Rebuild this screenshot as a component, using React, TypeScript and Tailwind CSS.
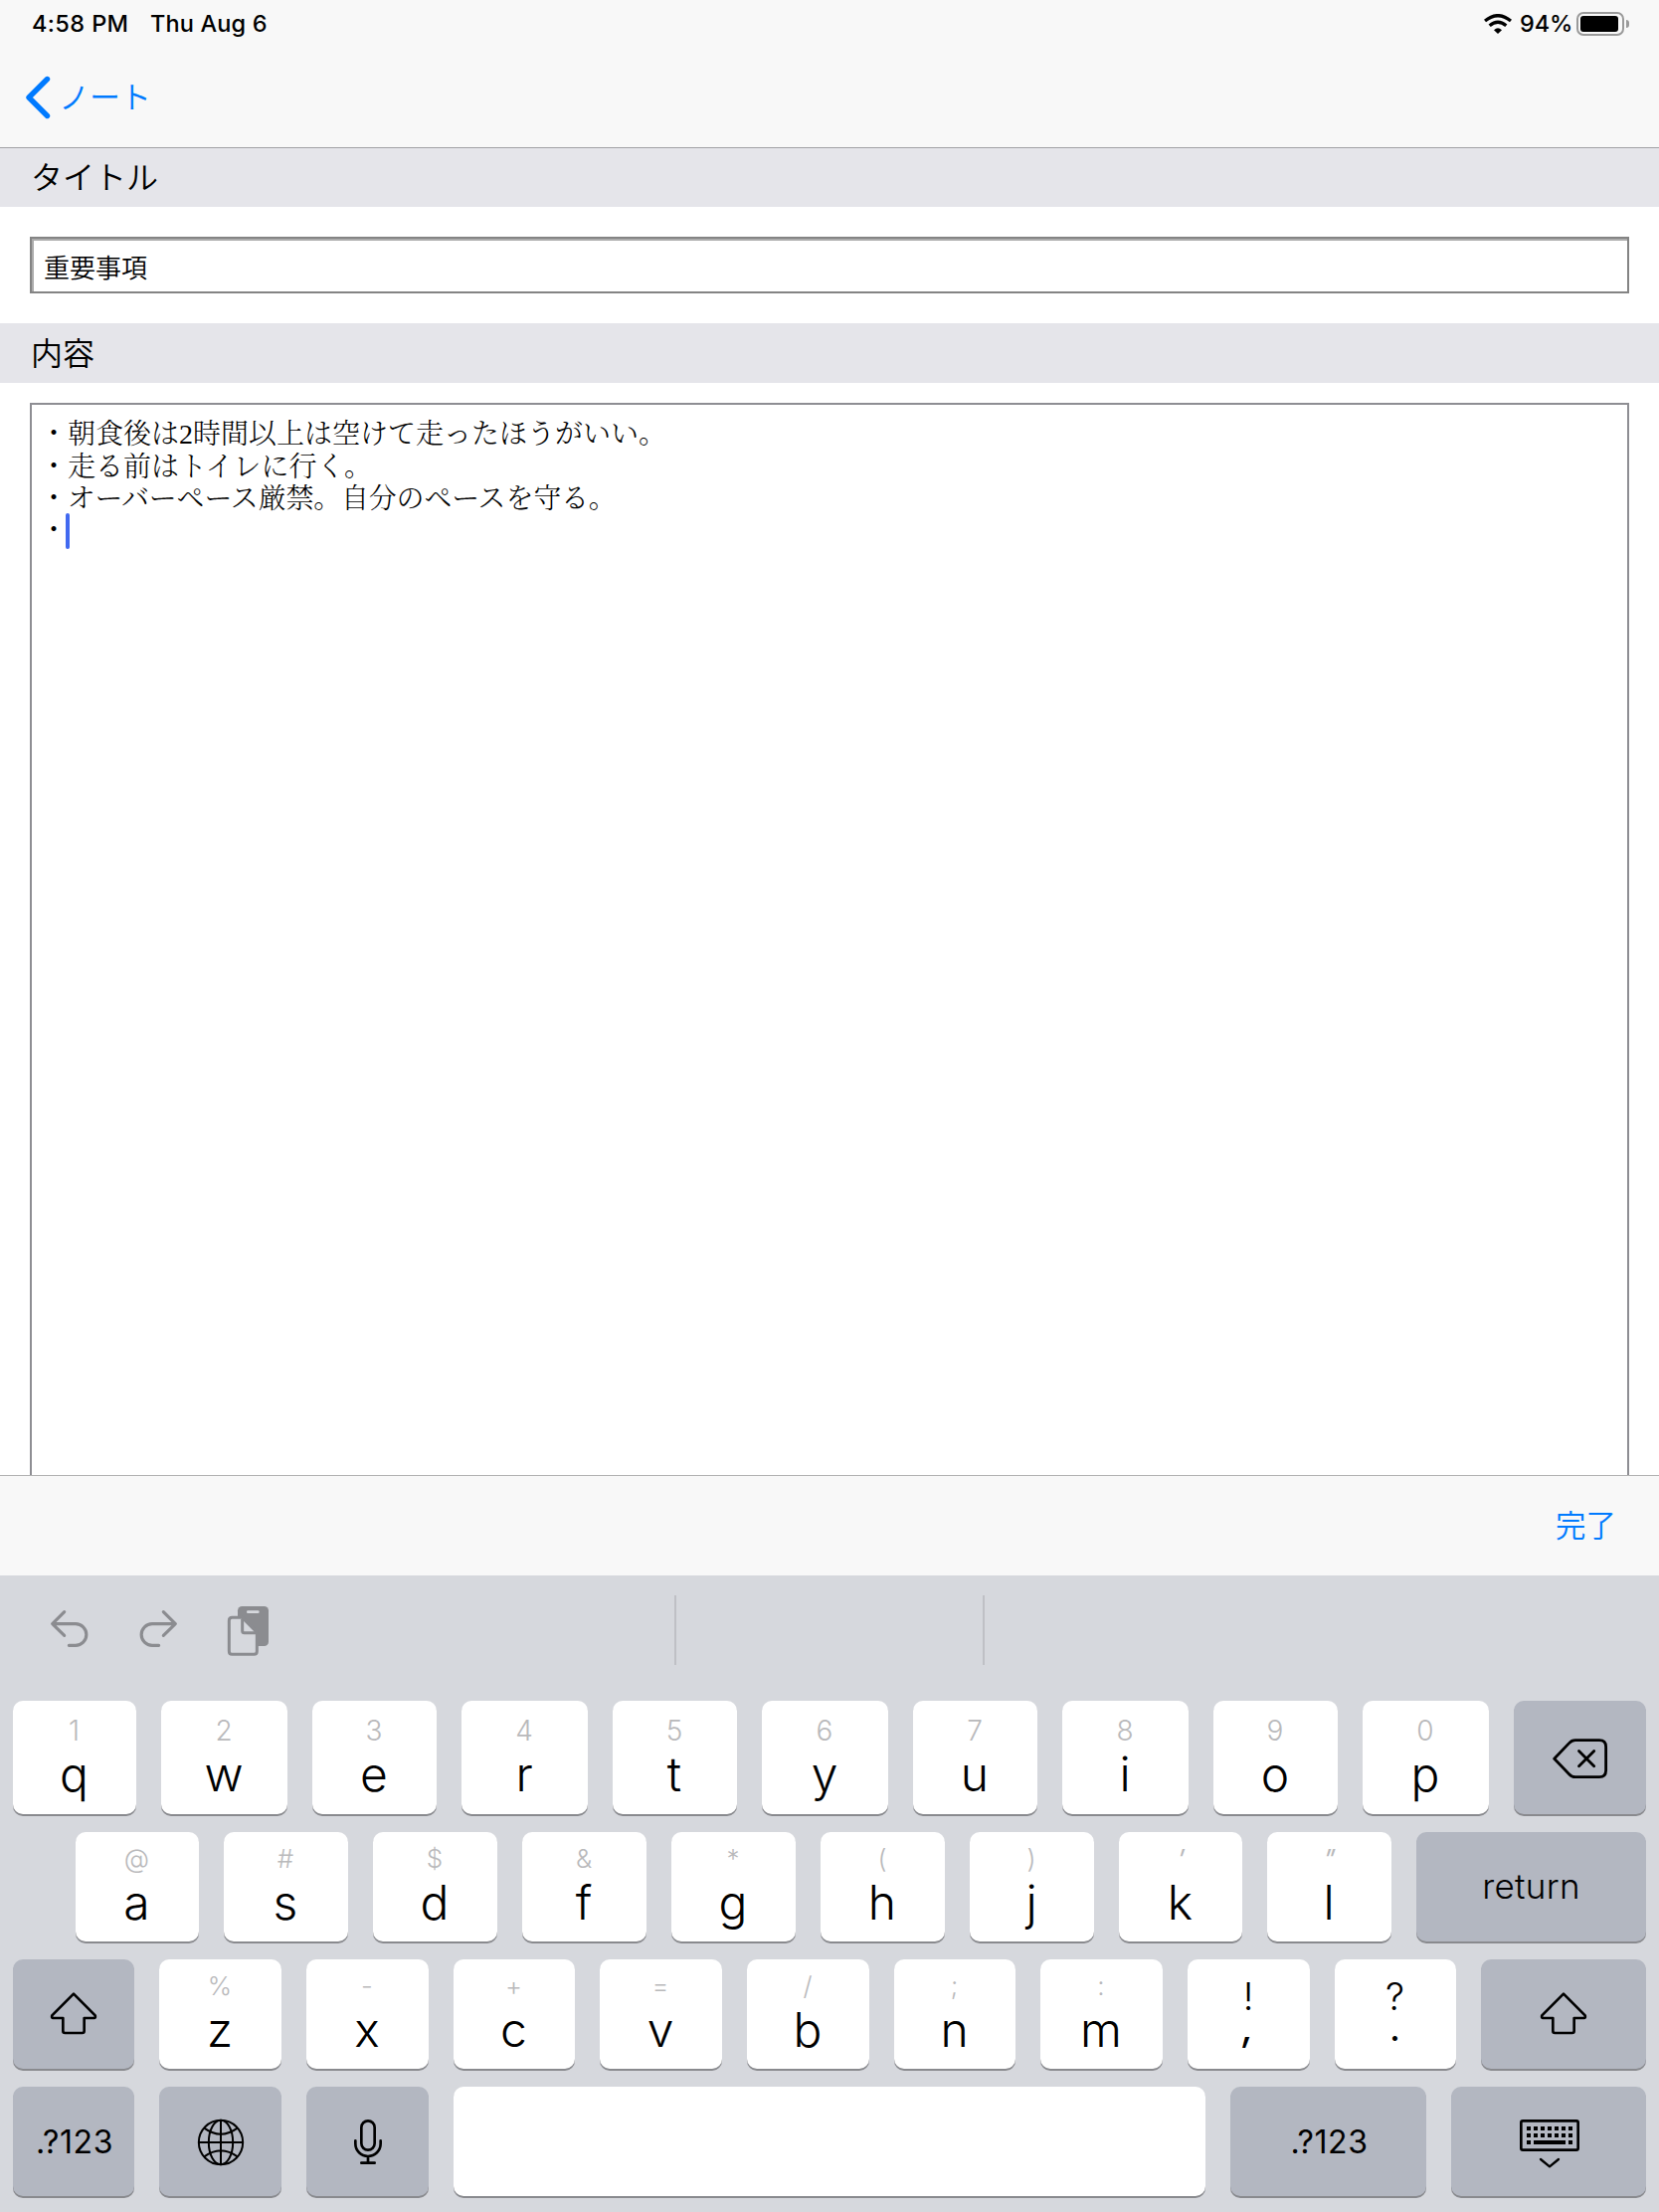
import React from "react";

const SANS = "font-['Inter','Noto_Sans_CJK_JP',sans-serif]";
const JP = "font-['Noto_Sans_CJK_JP',sans-serif]";

type KeyDef = { w: string; label: string; hint: string; slant?: boolean };

const ROW1: KeyDef[] = [
  { w: "w-[124px]", label: "q", hint: "1" },
  { w: "w-[127px]", label: "w", hint: "2" },
  { w: "w-[125px]", label: "e", hint: "3" },
  { w: "w-[127px]", label: "r", hint: "4" },
  { w: "w-[125px]", label: "t", hint: "5" },
  { w: "w-[127px]", label: "y", hint: "6" },
  { w: "w-[125px]", label: "u", hint: "7" },
  { w: "w-[127px]", label: "i", hint: "8" },
  { w: "w-[125px]", label: "o", hint: "9" },
  { w: "w-[127px]", label: "p", hint: "0" },
];

const ROW2: KeyDef[] = [
  { w: "w-[124px]", label: "a", hint: "@" },
  { w: "w-[125px]", label: "s", hint: "#" },
  { w: "w-[125px]", label: "d", hint: "$" },
  { w: "w-[125px]", label: "f", hint: "&" },
  { w: "w-[125px]", label: "g", hint: "*" },
  { w: "w-[125px]", label: "h", hint: "(" },
  { w: "w-[125px]", label: "j", hint: ")" },
  { w: "w-[124px]", label: "k", hint: "'", slant: true },
  { w: "w-[125px]", label: "l", hint: '"', slant: true },
];

const ROW3: KeyDef[] = [
  { w: "w-[123px]", label: "z", hint: "%" },
  { w: "w-[123px]", label: "x", hint: "-" },
  { w: "w-[122px]", label: "c", hint: "+" },
  { w: "w-[123px]", label: "v", hint: "=" },
  { w: "w-[123px]", label: "b", hint: "/" },
  { w: "w-[122px]", label: "n", hint: ";" },
  { w: "w-[123px]", label: "m", hint: ":" },
];

const KEY = "shrink-0 h-full rounded-[10px] shadow-[0_2px_0_#898a8e]";

function LetterKey({ k, tall }: { k: KeyDef; tall?: boolean }) {
  return (
    <div className={`${KEY} ${k.w} flex flex-col items-center bg-white pr-px ${tall ? "pt-[16px]" : "pt-[14px]"}`}>
      <span
        className={`text-[#b9b9bb] ${tall ? "mb-[6px] text-[28px] leading-[28px]" : "mb-[7px] text-[26px] leading-[26px]"} ${k.slant ? "-skew-x-18 font-normal" : "font-[330]"}`}
      >
        {k.hint}
      </span>
      <span className="text-[48px] leading-[48px] font-[350] text-black">{k.label}</span>
    </div>
  );
}

function PunctKey({ w, top, bottom }: { w: string; top: string; bottom: string }) {
  return (
    <div className={`${KEY} ${w} flex flex-col items-center bg-white pt-[22px] pr-px text-[38px] leading-[31px] text-black`}>
      <span className="font-[350]">{top}</span>
      <span className={bottom === "," ? "-skew-x-6 font-medium" : "font-normal"}>{bottom}</span>
    </div>
  );
}

function DarkKey({ w, children }: { w: string; children: React.ReactNode }) {
  return <div className={`${KEY} ${w} flex items-center justify-center bg-[#b3b7c1] text-black`}>{children}</div>;
}

function ShiftIcon() {
  return (
    <svg className="mb-[2px] h-[45px] w-[48px]" viewBox="150 545 144 135" fill="none" stroke="black" strokeWidth="8" strokeLinejoin="round">
      <path d="M222 553L287 618Q289 626 284 626H254V665Q254 671 248 671H196Q190 671 190 665V626H160Q155 626 157 618Z" />
    </svg>
  );
}

function DeleteIcon() {
  return (
    <svg className="mt-[3px] h-[43px] w-[57px]" viewBox="930 860 170 130" fill="none" stroke="black" strokeWidth="8.5" strokeLinecap="round" strokeLinejoin="round">
      <path d="M937 924L982 877Q990 868 1001 868H1074Q1094 868 1094 888V960Q1094 980 1074 980H1001Q990 980 982 971Z" />
      <path d="M1012 901L1058 947M1058 901L1012 947" />
    </svg>
  );
}

function GlobeIcon() {
  return (
    <svg className="mt-[2px] h-[48px] w-[48px]" viewBox="594 930 144 144" fill="none" stroke="black" strokeWidth="6">
      <circle cx="666" cy="1002" r="66.5" />
      <ellipse cx="666" cy="1002" rx="36.5" ry="66.5" />
      <path d="M666 935V1069M599 1002H733M615 958Q666 996 717 958M615 1046Q666 1008 717 1046" />
    </svg>
  );
}

function MicIcon() {
  return (
    <svg className="mt-[2px] h-[48px] w-[32px]" viewBox="1062 930 96 144" fill="none" stroke="black" strokeWidth="8" strokeLinecap="round">
      <rect x="1090" y="937" width="40" height="88" rx="20" />
      <path d="M1072 997V1006A38 38 0 0 0 1148 1006V997M1110 1044V1062M1090 1064H1130" />
    </svg>
  );
}

function KeyboardIcon() {
  const cols = [1155, 1176, 1197, 1218, 1239, 1260, 1281];
  return (
    <svg className="mt-[5px] ml-[2px] h-[52px] w-[62px]" viewBox="1131 930 186 156" fill="none">
      <rect x="1138" y="937" width="172" height="88" rx="5" stroke="black" strokeWidth="8" />
      {cols.map((x) => (
        <rect key={x} x={x} y="954" width="12" height="12" fill="black" />
      ))}
      {cols.map((x) => (
        <rect key={x} x={x} y="975" width="12" height="12" fill="black" />
      ))}
      <path fill="black" d="M1155 996h12v12h-12zM1176 996h96v12h-96zM1281 996h12v12h-12z" />
      <path d="M1197 1053L1224 1075L1251 1053" stroke="black" strokeWidth="7" strokeLinecap="round" strokeLinejoin="round" />
    </svg>
  );
}

function StatusBar() {
  return (
    <div className="flex h-12 items-center pl-[32px] text-[23.5px] font-medium text-black">
      <span className="w-[119px] whitespace-nowrap tracking-[0.4px]">4:58 PM</span>
      <span className="whitespace-nowrap tracking-[0.15px]">Thu Aug 6</span>
      <div className="ml-auto flex items-center pr-[30px]">
        <svg className="h-[20px] w-[28px]" viewBox="276 41 84 60" fill="none">
          <path d="M279 62Q318 30 357 62" stroke="black" strokeWidth="10" />
          <path d="M293 76Q318 55 343 76" stroke="black" strokeWidth="10" />
          <path d="M306 90Q318 78 330 90L318 101Z" fill="black" />
        </svg>
        <span className="ml-[8px] w-[57px] whitespace-nowrap tracking-[-0.1px]">94%</span>
        <div className="h-[24px] w-[48px] rounded-[7px] border-2 border-[#9a9a9a] p-[2px]">
          <div className="h-full w-[38px] rounded-[3px] bg-black" />
        </div>
        <div className="ml-[2px] h-[8px] w-[3px] rounded-r-full bg-[#9a9a9a]" />
      </div>
    </div>
  );
}

export default function App() {
  return (
    <div className={`flex h-[2224px] w-[1668px] flex-col overflow-hidden bg-white ${SANS}`}>
      <header className="h-[149px] shrink-0 border-b border-[#a2a2a6] bg-[#f8f8f8]">
        <StatusBar />
        <div className="flex h-[100px] items-center pl-[24px] text-[#007aff]">
          <svg className="h-[44px] w-[28px]" viewBox="0 0 28 44" fill="none" stroke="currentColor" strokeWidth="5.4" strokeLinecap="round" strokeLinejoin="round">
            <path d="M23.500 3.500L5 22L23.500 40.500" />
          </svg>
          <span className={`mb-[4px] ml-[7px] text-[31px] leading-[40px] font-[350] ${JP}`}>ノート</span>
        </div>
      </header>

      <div className={`flex h-[59px] shrink-0 items-center bg-[#e5e5ea] pb-[6px] pl-[31px] text-[32px] font-[350] text-black ${JP}`}>タイトル</div>

      <div className="h-[117px] shrink-0 px-[30px] pt-[30px]">
        <div className="h-[57px] border-2 border-[#848484]">
          <div className={`flex h-full items-center border-t-2 border-l-2 border-[#acacac] pl-[10px] text-[26px] font-[350] text-black ${JP}`}>
            重要事項
          </div>
        </div>
      </div>

      <div className={`flex h-[60px] shrink-0 items-center bg-[#e5e5ea] pb-[5px] pl-[31px] text-[32px] font-[350] text-black ${JP}`}>内容</div>

      <main className="h-[1098px] shrink-0 px-[30px] pt-[20px]">
        <div className="h-full border-2 border-b-0 border-[#8e8e93] pt-[14px] pl-[8px] font-['Liberation_Serif','Noto_Serif_CJK_JP','Noto_Sans_CJK_JP',serif] text-[28px] leading-[32.400px] font-light text-black">
          <p>・朝食後は2時間以上は空けて走ったほうがいい。</p>
          <p className="relative top-px">・走る前はトイレに行く。</p>
          <p className="tracking-[-0.2px]">・オーバーペース厳禁。自分のペースを守る。</p>
          <p className="flex">
            <span className="w-[26px]">・</span>
            <span className="-mt-[2px] h-[36px] w-[4px] rounded-sm bg-[#4169f0]" />
          </p>
        </div>
      </main>

      <div className={`flex h-[101px] shrink-0 items-center justify-end border-t border-[#b2b2b2] bg-[#f8f8f8] pr-[43px] pb-[2px] text-[30.500px] font-[350] text-[#007aff] ${JP}`}>
        完了
      </div>

      <section className="flex-1 bg-[#d6d8dd]">
        <div className="flex h-[126px] pt-[20px] text-[#8b8c90]">
          <div className="flex h-[70px] w-[678px] items-start pt-[9px] pl-[50px]">
            <svg className="mt-[4px] h-[40px] w-[40px]" viewBox="150 470 120 120" fill="none" stroke="currentColor" strokeWidth="9.5" strokeLinecap="round" strokeLinejoin="round">
              <path d="M194 481L158 517L194 552M160 517H228a32 32 0 0 1 0 65H208" />
            </svg>
            <svg className="mt-[4px] ml-[50px] h-[40px] w-[40px]" viewBox="420 470 120 120" fill="none" stroke="currentColor" strokeWidth="9.5" strokeLinecap="round" strokeLinejoin="round">
              <path d="M493 481L529 517L493 552M527 517H459a32 32 0 0 0 0 65H479" />
            </svg>
            <svg className="ml-[47px] h-[53px] w-[45px]" viewBox="681 459 135 159">
              <rect x="717" y="465" width="93" height="120" rx="13" fill="currentColor" />
              <rect x="744" y="478" width="38" height="8" rx="4" fill="#d6d8dd" />
              <path
                d="M700 499H731L775 544V601Q775 610 766 610H700Q691 610 691 601V508Q691 499 700 499Z"
                fill="#d6d8dd"
                stroke="currentColor"
                strokeWidth="9"
                strokeLinejoin="round"
              />
              <path d="M731 503V539Q731 545 737 545H771" fill="none" stroke="currentColor" strokeWidth="9" />
            </svg>
          </div>
          <div className="h-[70px] w-[2px] bg-[#bfc0c5]" />
          <div className="w-[308px]" />
          <div className="h-[70px] w-[2px] bg-[#bfc0c5]" />
        </div>

        <div className="flex flex-col gap-[18px] px-[13px]">
          <div className="flex h-[114px] gap-[25px]">
            {ROW1.map((k) => (
              <LetterKey key={k.label} k={k} tall />
            ))}
            <DarkKey w="w-[133px]">
              <DeleteIcon />
            </DarkKey>
          </div>
          <div className="flex h-[110px] gap-[25px] pl-[63px]">
            {ROW2.map((k) => (
              <LetterKey key={k.label} k={k} />
            ))}
            <DarkKey w="w-[231px]">
              <span className="mb-[2px] text-[35px] leading-[42px] font-[360] tracking-[0.3px]">return</span>
            </DarkKey>
          </div>
          <div className="flex h-[110px] gap-[25px]">
            <DarkKey w="w-[122px]">
              <ShiftIcon />
            </DarkKey>
            {ROW3.map((k) => (
              <LetterKey key={k.label} k={k} />
            ))}
            <PunctKey w="w-[123px]" top="!" bottom="," />
            <PunctKey w="w-[122px]" top="?" bottom="." />
            <DarkKey w="w-[166px]">
              <ShiftIcon />
            </DarkKey>
          </div>
          <div className="flex h-[110px] gap-[25px]">
            <DarkKey w="w-[122px]">
              <span className="mt-[2px] ml-[2px] text-[32px] leading-[40px] font-[370] tracking-[0.6px]">.?123</span>
            </DarkKey>
            <DarkKey w="w-[123px]">
              <GlobeIcon />
            </DarkKey>
            <DarkKey w="w-[123px]">
              <MicIcon />
            </DarkKey>
            <div className={`${KEY} w-[756px] bg-white`} />
            <DarkKey w="w-[197px]">
              <span className="mt-[2px] ml-[2px] text-[32px] leading-[40px] font-[370] tracking-[0.6px]">.?123</span>
            </DarkKey>
            <DarkKey w="w-[196px]">
              <KeyboardIcon />
            </DarkKey>
          </div>
        </div>
      </section>
    </div>
  );
}
